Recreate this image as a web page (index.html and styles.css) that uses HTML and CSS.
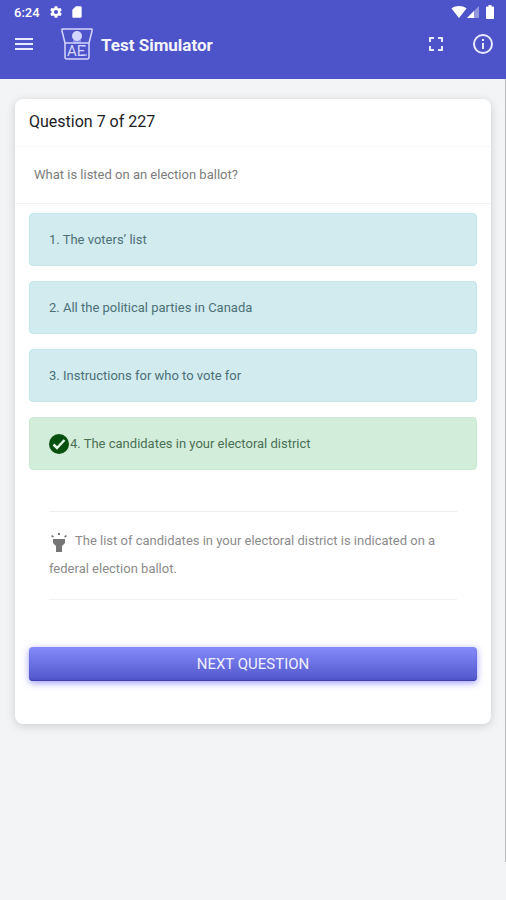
FILE: index.html
```html
<!DOCTYPE html>
<html lang="en">
<head>
<meta charset="utf-8">
<meta name="viewport" content="width=device-width, initial-scale=1">
<title>Test Simulator</title>
<link rel="stylesheet" href="styles.css">
</head>
<body>
<header class="app-header">
  <div class="status-bar">
    <span class="clock">6:24</span>
    <svg class="status-icon" viewBox="0 0 24 24" width="14" height="14" aria-hidden="true"><path fill="currentColor" d="M19.4 13a7.500 7.500 0 0 0 0-2l2.100-1.650a.5.5 0 0 0 .12-.64l-2-3.460a.5.5 0 0 0-.61-.22l-2.490 1a7.300 7.300 0 0 0-1.690-.98l-.38-2.650A.49.49 0 0 0 14 2h-4a.49.49 0 0 0-.49.42l-.38 2.650c-.61.25-1.170.59-1.690.98l-2.490-1a.49.49 0 0 0-.61.22l-2 3.460a.49.49 0 0 0 .12.64L4.570 11a8 8 0 0 0 0 2l-2.110 1.650a.5.5 0 0 0-.12.640l2 3.460c.12.22.39.3.61.22l2.490-1c.52.4 1.080.73 1.690.98l.38 2.650c.03.24.24.42.49.42h4c.25 0 .46-.18.49-.42l.38-2.650c.61-.25 1.170-.59 1.690-.98l2.490 1c.23.09.49 0 .61-.22l2-3.460a.5.5 0 0 0-.12-.64zM12 15.500a3.500 3.500 0 1 1 0-7 3.500 3.500 0 0 1 0 7z"/></svg>
    <svg class="status-icon card-icon" viewBox="0 0 24 24" width="14" height="14" aria-hidden="true"><path fill="currentColor" d="M18 2h-8L4 8v12c0 1.100.9 2 2 2h12c1.100 0 2-.9 2-2V4c0-1.100-.9-2-2-2z"/></svg>
    <span class="status-right">
      <svg viewBox="0 0 16 14" width="16" height="14" aria-hidden="true"><path fill="currentColor" d="M.5 3.500C5 .3 11 .3 15.500 3.500L8 13z"/></svg>
      <svg viewBox="0 0 12 14" width="12" height="14" aria-hidden="true"><path fill="currentColor" opacity=".4" d="M12 1v12H0z"/><path fill="currentColor" d="M7 6v7H0z"/></svg>
      <svg class="battery" viewBox="0 0 8 14" width="8" height="14" aria-hidden="true"><path fill="currentColor" d="M2.500 0h3v1.500H7q1 0 1 1V13q0 1-1 1H1q-1 0-1-1V2.500q0-1 1-1h1.500z"/></svg>
    </span>
  </div>
  <div class="toolbar">
    <button class="icon-button" type="button" aria-label="Menu">
      <svg viewBox="0 0 18 14" width="18" height="14"><path fill="none" stroke="currentColor" stroke-width="2" d="M0 2h18M0 7h18M0 12h18"/></svg>
    </button>
    <svg class="logo" viewBox="0 0 32 32" width="32" height="32" role="img" aria-label="Logo">
      <g fill="none" stroke="currentColor" stroke-width="1.500" stroke-linejoin="round">
        <path d="M4 15L1 3V1h30v2l-3 12"/>
        <path d="M4 15h24v14q0 2-2 2H6q-2 0-2-2z"/>
        <path d="M21 18h4M20 27h6" stroke-width="1"/>
      </g>
      <circle cx="16" cy="8" r="5" fill="currentColor"/>
      <path d="M12 12h8v3h-8z" fill="currentColor" opacity=".4"/>
      <text class="logo-text" x="6" y="28">AE</text>
    </svg>
    <h1 class="app-title">Test Simulator</h1>
    <button class="icon-button" type="button" aria-label="Full screen">
      <svg viewBox="0 0 14 14" width="14" height="14"><path fill="none" stroke="currentColor" stroke-width="2" d="M1 5V1h4M9 1h4v4M13 9v4H9M5 13H1V9"/></svg>
    </button>
    <button class="icon-button info-button" type="button" aria-label="Information">
      <svg viewBox="0 0 20 20" width="20" height="20"><circle cx="10" cy="10" r="9" fill="none" stroke="currentColor" stroke-width="2"/><path fill="currentColor" d="M9 5h2v2H9zM9 9h2v6H9z"/></svg>
    </button>
  </div>
</header>
<main class="page">
  <section class="card">
    <h2 class="card-title">Question 7 of 227</h2>
    <p class="question">What is listed on an election ballot?</p>
    <div class="card-body">
      <div class="options">
        <button class="option" type="button">1. The voters’ list</button>
        <button class="option" type="button">2. All the political parties in Canada</button>
        <button class="option" type="button">3. Instructions for who to vote for</button>
        <button class="option correct" type="button"><svg viewBox="0 0 20 20" width="20" height="20" aria-hidden="true"><circle cx="10" cy="10" r="10" fill="#07500f"/><path fill="none" stroke="#e4f5e8" stroke-width="2.500" d="M4.500 10.500l3.500 3.500 7.500-8"/></svg><span>4. The candidates in your electoral district</span></button>
      </div>
      <div class="explanation">
        <p><svg class="torch" viewBox="0 0 20 20" width="20" height="20" aria-hidden="true"><path fill="#757575" d="M4 7h12v4l-3 3v6H7v-6l-3-3zM9 1h2v2H9zM2 4l1.500-1L5 5 3.500 5.500zM18 4l-1.500-1L15 5l1.500.5z"/></svg> The list of candidates in your electoral district is indicated on a federal election ballot.</p>
      </div>
      <button class="next-button" type="button">NEXT QUESTION</button>
    </div>
  </section>
</main>
<div class="scroll-thumb"></div>
</body>
</html>
```
FILE: styles.css
```css
* {
  box-sizing: border-box;
}

body {
  margin: 0;
  min-height: 100vh;
  background: #f2f4f6;
  color: #7c7c7c;
  font-family: Roboto, "Liberation Sans", sans-serif;
  font-size: 13px;
}

button {
  border: 0;
  font: inherit;
  cursor: pointer;
}

svg {
  display: block;
  flex: none;
}

.app-header {
  background: #4d53c8;
  color: #fff;
  padding-bottom: 15px;
}

.status-bar {
  display: flex;
  align-items: center;
  height: 24px;
  padding: 0 12px 0 14px;
}

.clock {
  font-size: 13px;
  font-weight: 500;
  margin-right: 9px;
}

.card-icon {
  margin-left: 7px;
}

.status-right {
  display: flex;
  margin-left: auto;
}

.battery {
  margin-left: 7px;
}

.toolbar {
  display: flex;
  align-items: center;
  height: 40px;
  padding: 0 13px 0 15px;
}

.icon-button {
  display: flex;
  padding: 0;
  background: none;
  color: #e8eaff;
}

.info-button {
  margin-left: 30px;
}

.logo {
  margin-left: 28px;
  color: #d3d6ff;
}

.logo-text {
  fill: currentColor;
  font-size: 15px;
}

.app-title {
  flex: 1;
  margin: 2px 0 0 8px;
  font-size: 17px;
  line-height: 24px;
  font-weight: 700;
  color: #f4f5ff;
}

.page {
  padding: 20px 15px;
}

.card {
  background: #fff;
  border-radius: 8px;
  box-shadow: 0 2px 10px rgba(0, 0, 0, 0.16);
}

.card-title {
  margin: 0;
  padding: 11px 14px 13px;
  border-bottom: 1px solid #f7f7f8;
  color: #1c1c24;
  font-size: 16px;
  line-height: 23px;
  font-weight: 400;
}

.question {
  margin: 0;
  padding: 16px 19px;
  border-bottom: 1px solid #f3f3f3;
  line-height: 24px;
}

.card-body {
  padding: 9px 14px 43px;
}

.options {
  display: grid;
  gap: 15px;
}

.option {
  display: flex;
  align-items: center;
  min-height: 53px;
  padding: 0 19px;
  border: 1px solid #c3e6eb;
  border-radius: 4px;
  background: #d1ebef;
  color: #4d7077;
  text-align: left;
}

.option.correct {
  border-color: #c9e9d1;
  background: #d3eddb;
  color: #4a7054;
}

.option svg {
  margin-right: 1px;
}

.explanation {
  margin: 41px 20px 47px;
  padding: 15px 0 16px;
  border-top: 1px solid #ededed;
  border-bottom: 1px solid #f1f1f1;
  color: #8c8c8c;
  line-height: 28px;
}

.explanation p {
  margin: 0;
}

.torch {
  display: inline-block;
  vertical-align: middle;
  margin-right: 3px;
}

.next-button {
  display: block;
  width: 100%;
  height: 34px;
  border-radius: 4px;
  background: linear-gradient(#868bfb, #5055c9);
  box-shadow: 0 2px 7px rgba(90, 90, 255, 0.6), inset 0 -1px 1px #3c3eaf;
  color: #eef0ff;
  font-size: 15px;
}

.scroll-thumb {
  position: absolute;
  top: 79px;
  right: 0;
  width: 1px;
  height: 87vh;
  background: #b9babb;
}
```
